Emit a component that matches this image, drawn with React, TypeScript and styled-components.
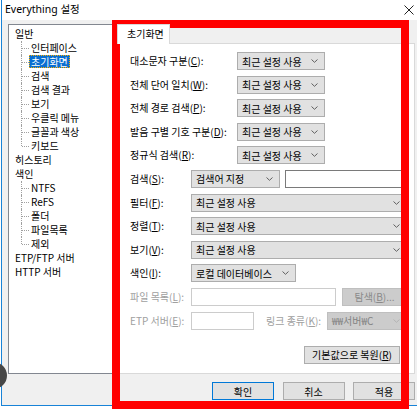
import React from "react"
import styled, { createGlobalStyle } from "styled-components"

const GlobalStyle = createGlobalStyle`
  html, body {
    margin: 0;
    padding: 0;
    background: #ffffff;
  }
  body {
    font-family: "Noto Sans CJK KR", "Noto Sans", sans-serif;
    font-size: 10px;
    color: #000000;
  }
`

const treeItems: { label: string; level: 0 | 1; last?: boolean; selected?: boolean }[] = [
  { label: "일반", level: 0 },
  { label: "인터페이스", level: 1 },
  { label: "초기화면", level: 1, selected: true },
  { label: "검색", level: 1 },
  { label: "검색 결과", level: 1 },
  { label: "보기", level: 1 },
  { label: "우클릭 메뉴", level: 1 },
  { label: "글꼴과 색상", level: 1 },
  { label: "키보드", level: 1, last: true },
  { label: "히스토리", level: 0 },
  { label: "색인", level: 0 },
  { label: "NTFS", level: 1 },
  { label: "ReFS", level: 1 },
  { label: "폴더", level: 1 },
  { label: "파일목록", level: 1 },
  { label: "제외", level: 1, last: true },
  { label: "ETP/FTP 서버", level: 0 },
  { label: "HTTP 서버", level: 0 },
]

const Chevron: React.FC<{ faded?: boolean }> = ({ faded }) => (
  <svg width="7" height="4" viewBox="0 0 7 4">
    <path d="M0.5 0.5 L3.5 3.3 L6.5 0.5" fill="none" stroke={faded ? "#b4b4b4" : "#606060"} strokeWidth="1" />
  </svg>
)

const Mn: React.FC<{ k: string; colon?: boolean }> = ({ k, colon = true }) => (
  <>
    (<u>{k}</u>){colon ? ":" : ""}
  </>
)

const App: React.FC = () => {
  return (
    <Screen>
      <GlobalStyle />
      <Window>
        <TitleBar>
          <Title>Everything 설정</Title>
          <svg width="10" height="10" viewBox="0 0 10 10">
            <path d="M0.5 0.5 L9.5 9.5 M9.5 0.5 L0.5 9.5" stroke="#222" strokeWidth="1" />
          </svg>
        </TitleBar>
        <Body>
          <Main>
            <Tree>
              {treeItems.map((item) => (
                <TreeRow key={item.label} $level={item.level} $last={item.last}>
                  <TreeLabel $selected={item.selected}>{item.label}</TreeLabel>
                </TreeRow>
              ))}
            </Tree>
            <TabControl>
              <TabStrip>
                <Tab>초기화면</Tab>
              </TabStrip>
              <TabPage>
                <Form>
                  <Row>
                    <Label $w={107}>대소문자 구분<Mn k="C" /></Label>
                    <Combo $w={88}>최근 설정 사용<Chevron /></Combo>
                  </Row>
                  <Row>
                    <Label $w={107}>전체 단어 일치<Mn k="W" /></Label>
                    <Combo $w={88}>최근 설정 사용<Chevron /></Combo>
                  </Row>
                  <Row>
                    <Label $w={107}>전체 경로 검색<Mn k="P" /></Label>
                    <Combo $w={88}>최근 설정 사용<Chevron /></Combo>
                  </Row>
                  <Row>
                    <Label $w={107}>발음 구별 기호 구분<Mn k="D" /></Label>
                    <Combo $w={88}>최근 설정 사용<Chevron /></Combo>
                  </Row>
                  <Row>
                    <Label $w={107}>정규식 검색<Mn k="R" /></Label>
                    <Combo $w={88}>최근 설정 사용<Chevron /></Combo>
                  </Row>
                  <Row>
                    <Label $w={61}>검색<Mn k="S" /></Label>
                    <Combo $w={89}>검색어 지정<Chevron /></Combo>
                    <TextBox />
                  </Row>
                  <Row>
                    <Label $w={61}>필터<Mn k="F" /></Label>
                    <Combo>최근 설정 사용<Chevron /></Combo>
                  </Row>
                  <Row>
                    <Label $w={61}>정렬<Mn k="T" /></Label>
                    <Combo>최근 설정 사용<Chevron /></Combo>
                  </Row>
                  <Row>
                    <Label $w={61}>보기<Mn k="V" /></Label>
                    <Combo>최근 설정 사용<Chevron /></Combo>
                  </Row>
                  <Row>
                    <Label $w={61}>색인<Mn k="I" /></Label>
                    <Combo $w={105}>로컬 데이터베이스<Chevron /></Combo>
                  </Row>
                  <Row>
                    <Label $w={61} $disabled>파일 목록<Mn k="L" /></Label>
                    <TextBox $w={145} $disabled />
                    <BrowseButton>탐색<Mn k="B" colon={false} />...</BrowseButton>
                  </Row>
                  <Row>
                    <Label $w={61} $disabled>ETP 서버<Mn k="E" /></Label>
                    <TextBox $w={63} $disabled />
                    <Label $w={61} $disabled $indent={7}>링크 종류<Mn k="K" /></Label>
                    <Combo $disabled>₩₩서버₩C<Chevron faded /></Combo>
                  </Row>
                </Form>
                <RestoreRow>
                  <PushButton $w={96}>기본값으로 복원<Mn k="R" colon={false} /></PushButton>
                </RestoreRow>
              </TabPage>
            </TabControl>
          </Main>
          <Footer>
            <PushButton $w={62} $default>확인</PushButton>
            <PushButton $w={62}>취소</PushButton>
            <PushButton $w={62}>적용</PushButton>
          </Footer>
        </Body>
      </Window>
      <Highlight />
      <CursorBlob />
    </Screen>
  )
}

export default App

const Screen = styled.div`
  position: relative;
  width: 417px;
  height: 414px;
  overflow: hidden;
  background: #ffffff;
`

const Window = styled.div`
  display: flex;
  flex-direction: column;
  width: 420px;
  height: 406px;
  margin-left: 1px;
  border-left: 1px solid #1883d7;
  border-bottom: 1px solid #1883d7;
  box-sizing: border-box;
  background: #ffffff;
`

const TitleBar = styled.div`
  height: 20px;
  display: flex;
  align-items: center;
  justify-content: space-between;
  padding: 0 7px 0 3px;
  flex-shrink: 0;
`

const Title = styled.span`
  font-family: "Noto Sans", "Noto Sans CJK KR", sans-serif;
  font-size: 10.5px;
  line-height: 14px;
  color: #000;
  margin-top: -3px;
`

const Body = styled.div`
  flex: 1;
  display: flex;
  flex-direction: column;
  background: #f0f0f0;
`

const Main = styled.div`
  flex: 1;
  display: flex;
  gap: 4px;
  padding: 4px 6px 0 6px;
`

const Tree = styled.div`
  width: 105px;
  background: #ffffff;
  border: 1px solid #828790;
  padding: 2px 0 0 5px;
  box-sizing: border-box;
`

const TreeRow = styled.div<{ $level: 0 | 1; $last?: boolean }>`
  position: relative;
  height: 14px;
  line-height: 14px;
  padding-left: ${(p) => (p.$level === 1 ? 16 : 0)}px;
  white-space: nowrap;

  ${(p) =>
    p.$level === 1 &&
    `
    &::before {
      content: "";
      position: absolute;
      left: 7px;
      top: 0;
      height: ${p.$last ? 7 : 14}px;
      border-left: 1px dotted #a0a0a0;
    }
    &::after {
      content: "";
      position: absolute;
      left: 8px;
      top: 7px;
      width: 7px;
      border-top: 1px dotted #a0a0a0;
    }
  `}
`

const TreeLabel = styled.span<{ $selected?: boolean }>`
  display: inline-block;
  padding: 0 2px;
  margin-left: -1px;
  line-height: 13px;
  color: ${(p) => (p.$selected ? "#ffffff" : "#000000")};
  background: ${(p) => (p.$selected ? "#0a6ed1" : "transparent")};
  outline: ${(p) => (p.$selected ? "1px dotted #ffb000" : "none")};
  outline-offset: -1px;
`

const TabControl = styled.div`
  flex: 1;
  display: flex;
  flex-direction: column;
`

const TabStrip = styled.div`
  height: 19px;
  display: flex;
  align-items: flex-end;
  padding-left: 0;
`

const Tab = styled.div`
  width: 53px;
  height: 20px;
  margin-bottom: -1px;
  box-sizing: border-box;
  background: #ffffff;
  border: 1px solid #d9d9d9;
  border-bottom: none;
  padding-left: 9px;
  line-height: 18px;
  position: relative;
  z-index: 1;
`

const TabPage = styled.div`
  flex: 1;
  background: #ffffff;
  border: 1px solid #d9d9d9;
  padding: 8px 7px 0 12px;
  display: flex;
  flex-direction: column;
`

const Form = styled.div`
  display: flex;
  flex-direction: column;
  gap: 5.6px;
`

const Row = styled.div`
  display: flex;
  align-items: center;
  height: 18px;
  gap: 5px;
`

const Label = styled.div<{ $w: number; $disabled?: boolean; $indent?: number }>`
  width: ${(p) => p.$w - 5}px;
  flex-shrink: 0;
  white-space: nowrap;
  line-height: 18px;
  margin-left: ${(p) => p.$indent ?? 0}px;
  color: ${(p) => (p.$disabled ? "#a0a0a0" : "#000000")};
`

const Combo = styled.div<{ $w?: number; $disabled?: boolean }>`
  ${(p) => (p.$w ? `width: ${p.$w}px; flex-shrink: 0;` : "flex: 1;")}
  height: 18px;
  box-sizing: border-box;
  display: flex;
  align-items: center;
  justify-content: space-between;
  padding: 0 6px 0 4px;
  background: ${(p) => (p.$disabled ? "#cccccc" : "#e1e1e1")};
  border: 1px solid ${(p) => (p.$disabled ? "#bfbfbf" : "#adadad")};
  color: ${(p) => (p.$disabled ? "#838383" : "#000000")};
  white-space: nowrap;
`

const TextBox = styled.div<{ $w?: number; $disabled?: boolean }>`
  ${(p) => (p.$w ? `width: ${p.$w}px; flex-shrink: 0;` : "flex: 1;")}
  height: 18px;
  box-sizing: border-box;
  background: #ffffff;
  border: 1px solid ${(p) => (p.$disabled ? "#cccccc" : "#7a7a7a")};
`

const BrowseButton = styled.div`
  flex: 1;
  margin-left: 1px;
  height: 18px;
  box-sizing: border-box;
  display: flex;
  align-items: center;
  justify-content: center;
  background: #cccccc;
  border: 1px solid #bfbfbf;
  color: #8a8a8a;
  white-space: nowrap;
`

const RestoreRow = styled.div`
  display: flex;
  justify-content: flex-end;
  margin-top: 16px;
  padding-right: 7px;
`

const PushButton = styled.div<{ $w: number; $default?: boolean }>`
  width: ${(p) => p.$w}px;
  height: 18px;
  box-sizing: border-box;
  display: flex;
  align-items: center;
  justify-content: center;
  background: #e1e1e1;
  border: 1px solid ${(p) => (p.$default ? "#0078d7" : "#adadad")};
  white-space: nowrap;
`

const Footer = styled.div`
  height: 31px;
  flex-shrink: 0;
  display: flex;
  justify-content: flex-end;
  gap: 8.5px;
  padding: 8px 6px 0 0;
  box-sizing: border-box;
`

const Highlight = styled.div`
  position: absolute;
  left: 112px;
  top: 20px;
  width: 297px;
  height: 389px;
  box-sizing: border-box;
  border: 8px solid #ff0000;
  pointer-events: none;
`

const CursorBlob = styled.div`
  position: absolute;
  left: -20px;
  top: 362px;
  width: 27px;
  height: 27px;
  border-radius: 50%;
  background: #474747;
`
